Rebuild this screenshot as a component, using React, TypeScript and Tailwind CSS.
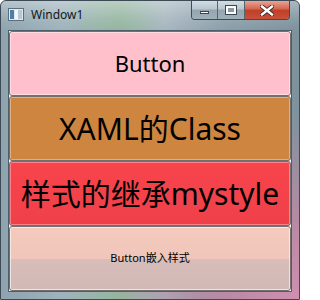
import React from "react";

const font = '"Noto Sans", "Noto Sans CJK SC", sans-serif';

function WinIcon() {
  return (
    <svg width="16" height="14" viewBox="0 0 16 14">
      <rect x="0.5" y="0.5" width="15" height="12" fill="#dfe8ee" stroke="#5b6e7a" />
      <rect x="2" y="2" width="4" height="9" fill="#4f7fa8" />
      <rect x="7" y="2" width="7" height="9" fill="#f4f8fb" />
      <rect x="10" y="2" width="4" height="9" fill="#b8c9d6" />
    </svg>
  );
}

export default function App() {
  return (
    <div
      className="w-[300px] h-[300px] flex flex-col overflow-hidden rounded-t-[6px] border border-[#3b4a54] bg-[radial-gradient(ellipse_at_100%_100%,#d08fb0_0%,#b88aa4_18%,rgba(140,150,160,0)_45%),linear-gradient(90deg,#8ea3ae_0%,#9fb3bd_20%,#94b69e_40%,#a7b6bf_55%,#8a9ea9_75%,#7d929d_100%)]"
      style={{ fontFamily: font }}
    >
      <div className="h-[29px] flex items-start shrink-0 bg-[linear-gradient(180deg,rgba(255,255,255,0.35)_0%,rgba(255,255,255,0.1)_60%,rgba(255,255,255,0)_100%)]">
        <div className="flex items-center gap-[7px] pl-[7px] pt-[7px]">
          <WinIcon />
          <span className="text-[12px] leading-[14px] text-[#101820]">Window1</span>
        </div>
        <div className="ml-auto mr-[9px] flex h-[19px] rounded-b-[4px] border border-t-0 border-[#3d4d58] overflow-hidden">
          <div className="w-[26px] h-full flex items-center justify-center border-r border-[#56666f] bg-[linear-gradient(180deg,#d3dde3_0%,#b8c6ce_45%,#94a5af_50%,#9fb0b9_100%)]">
            <div className="w-[9px] h-[3px] bg-white border border-[#3a4650] mt-[5px]" />
          </div>
          <div className="w-[27px] h-full flex items-center justify-center border-r border-[#56666f] bg-[linear-gradient(180deg,#d3dde3_0%,#b8c6ce_45%,#94a5af_50%,#9fb0b9_100%)]">
            <div className="w-[10px] h-[8px] border-[2px] border-white outline outline-1 outline-[#3a4650] bg-[#8a9aa4]" />
          </div>
          <div className="w-[44px] h-full flex items-center justify-center bg-[linear-gradient(180deg,#e8a594_0%,#d4644e_45%,#c13f26_50%,#c8503a_100%)]">
            <svg width="14" height="11" viewBox="0 0 14 11">
              <path d="M2 1.5 L12 9.5 M12 1.5 L2 9.5" stroke="#3a2a28" strokeWidth="4.2" strokeLinecap="square" />
              <path d="M2 1.5 L12 9.5 M12 1.5 L2 9.5" stroke="#ffffff" strokeWidth="2.4" strokeLinecap="square" />
            </svg>
          </div>
        </div>
      </div>
      <div className="flex-1 flex flex-col px-[7px] pb-[7px]">
        <div className="flex-1 grid grid-rows-4 bg-white border border-[#4e5e69]">
          <div className="rounded-[3px] border border-[#707070] bg-[#ffc0cb] shadow-[inset_0_0_0_1px_rgba(255,255,255,0.45)] flex items-center justify-center text-[22px] text-black">
            Button
          </div>
          <div className="rounded-[3px] border border-[#707070] bg-[#cd853f] shadow-[inset_0_0_0_1px_rgba(255,255,255,0.35)] flex items-center justify-center text-[30px] text-black">
            XAML的Class
          </div>
          <div className="rounded-[3px] border border-[#707070] bg-[linear-gradient(180deg,#f9444c_0%,#ef4049_100%)] shadow-[inset_0_0_0_1px_rgba(255,255,255,0.35)] flex items-center justify-center text-[30px] text-black whitespace-nowrap">
            样式的继承mystyle
          </div>
          <div className="rounded-[3px] border border-[#707070] bg-[linear-gradient(180deg,#f4cabd_0%,#efc6b9_50%,#d8bdb9_50%,#d1b9b5_100%)] shadow-[inset_0_0_0_1px_rgba(255,255,255,0.6)] flex items-center justify-center text-[11px] text-black">
            Button嵌入样式
          </div>
        </div>
      </div>
    </div>
  );
}
